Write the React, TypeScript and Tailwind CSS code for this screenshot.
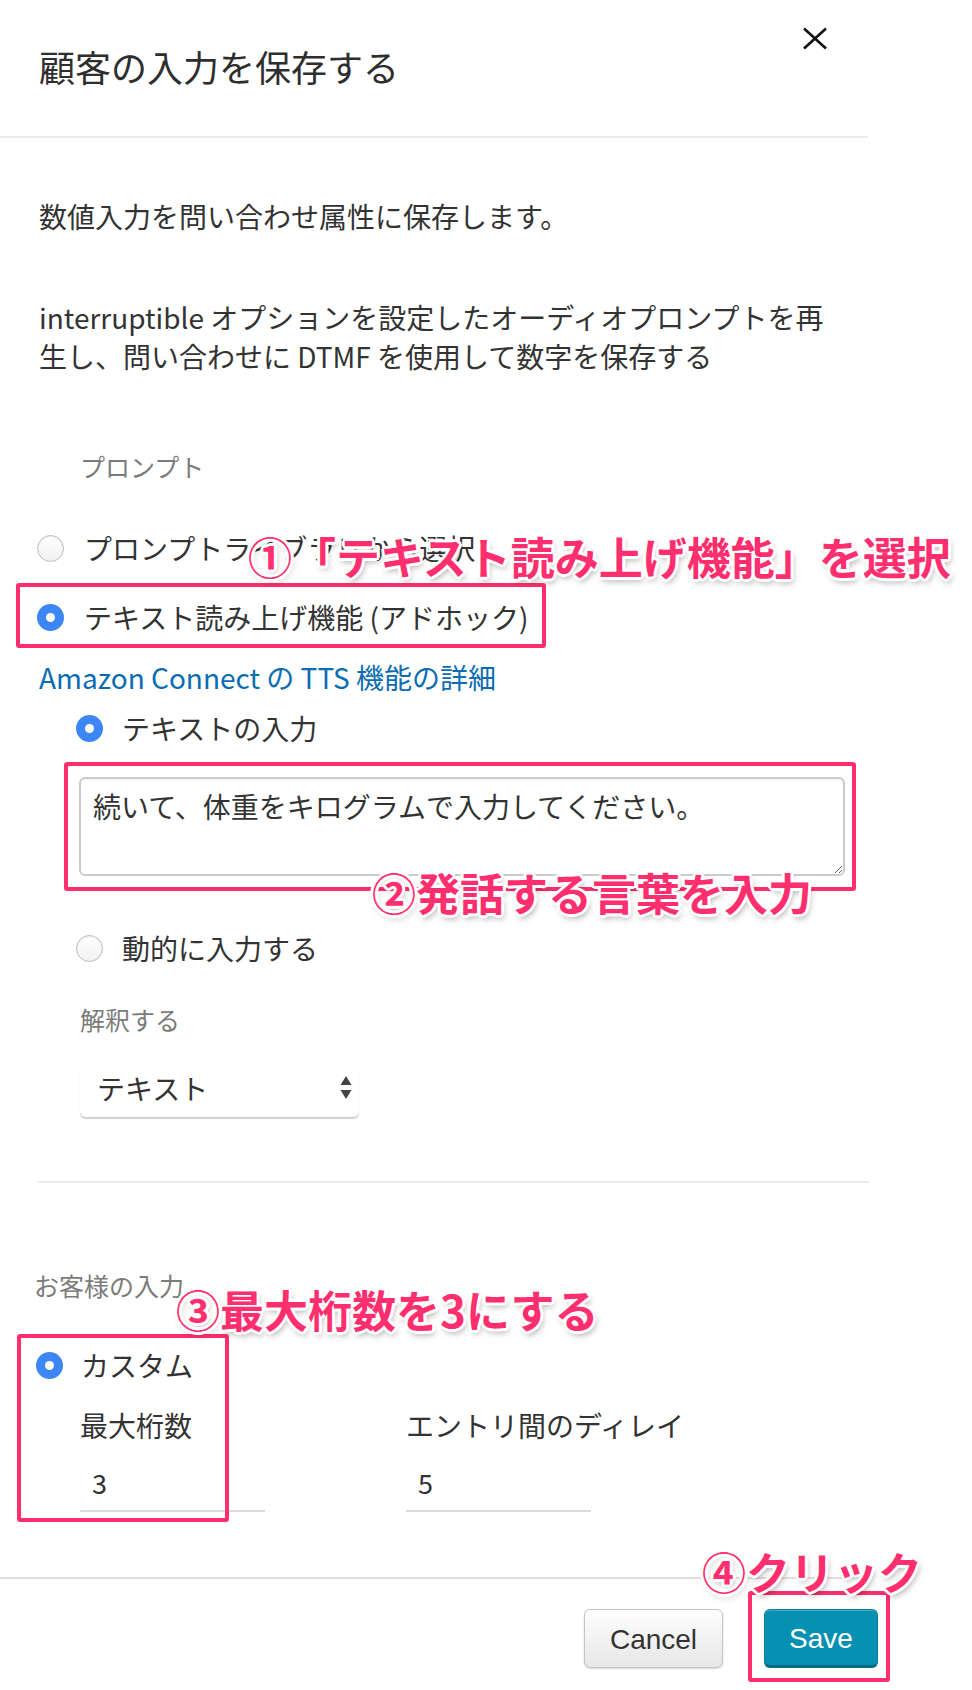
import React from "react"

interface RadioProps {
  checked?: boolean
}

function Radio({ checked }: RadioProps) {
  if (checked) {
    return (
      <span className="flex h-[27px] w-[27px] shrink-0 items-center justify-center rounded-full bg-[#3d86f5]">
        <span className="h-[9px] w-[9px] rounded-full bg-white" />
      </span>
    )
  }
  return (
    <span className="h-[27px] w-[27px] shrink-0 rounded-full border border-[#bcbcbc] bg-gradient-to-b from-white to-[#f1f1f1] shadow-[inset_0_1px_2px_rgba(0,0,0,0.08)]" />
  )
}

const note =
  "absolute whitespace-nowrap text-[44px] leading-[44px] font-bold text-[#ff2e6e] [text-shadow:3px_0_0_#fff,-3px_0_0_#fff,0_3px_0_#fff,0_-3px_0_#fff,2px_2px_0_#fff,-2px_-2px_0_#fff,2px_-2px_0_#fff,-2px_2px_0_#fff,2px_4px_6px_rgba(0,0,0,0.35)]"

const box = "absolute rounded-[3px] border-[4px] border-[#ff2e6e]"

export default function App() {
  return (
    <div className="relative h-[1690px] w-[972px] overflow-hidden bg-white font-['Noto_Sans_CJK_JP','Noto_Sans',sans-serif] text-[#333]">
      <div className="w-[890px]">
        {/* header */}
        <header className="flex h-[138px] w-[868px] items-start justify-between border-b-2 border-[#ececec]">
          <h1 className="ml-[39px] mt-[41px] text-[36px] font-normal leading-[50px] text-[#2e2e2e]">
            顧客の入力を保存する
          </h1>
          <button className="mr-[40px] mt-[27px]">
            <svg width="26" height="23" viewBox="0 0 26 23">
              <path d="M2 1.5 L24 21.5 M24 1.5 L2 21.5" stroke="#111" strokeWidth="2.6" fill="none" />
            </svg>
          </button>
        </header>

        {/* body */}
        <div className="px-[39px]">
          <p className="mt-[59px] text-[28px] leading-[39px]">数値入力を問い合わせ属性に保存します。</p>
          <p className="mt-[62px] w-[790px] text-[28px] leading-[39px]">
            interruptible オプションを設定したオーディオプロンプトを再生し、問い合わせに DTMF を使用して数字を保存する
          </p>

          <div className="ml-[41px] mt-[73px] text-[25px] leading-[34px] text-[#7b7b7b]">プロンプト</div>

          <label className="-ml-[2px] mt-[45px] flex h-[40px] items-center gap-[20px] text-[28px]">
            <Radio />
            <span>プロンプトライブラリから選択</span>
          </label>
          <label className="-ml-[2px] mt-[29px] flex h-[40px] items-center gap-[20px] text-[28px]">
            <Radio checked />
            <span>テキスト読み上げ機能 (アドホック)</span>
          </label>

          <a className="mt-[21px] block text-[28px] leading-[39px] text-[#0a6cb2]">Amazon Connect の TTS 機能の詳細</a>

          <label className="ml-[37px] mt-[11px] flex h-[40px] items-center gap-[19px] text-[28px]">
            <Radio checked />
            <span>テキストの入力</span>
          </label>

          <textarea
            readOnly
            defaultValue="続いて、体重をキログラムで入力してください。"
            className="ml-[40px] mt-[29px] block h-[99px] w-[766px] rounded-[6px] border-2 border-[#cbcbcb] px-[12px] pt-[8px] text-[28px] leading-[39px] text-[#333] shadow-[inset_0_1px_2px_rgba(0,0,0,0.06)] outline-none"
          />

          <label className="ml-[37px] mt-[52px] flex h-[40px] items-center gap-[19px] text-[28px]">
            <Radio />
            <span>動的に入力する</span>
          </label>

          <div className="ml-[41px] mt-[34px] text-[25px] leading-[34px] text-[#7b7b7b]">解釈する</div>

          <div className="ml-[41px] mt-[29px] flex h-[52px] w-[279px] items-center justify-between rounded-[6px] bg-white pb-[6px] pl-[17px] pr-[6px] shadow-[0_2px_1px_#cfcfcf]">
            <span className="text-[28px] leading-[39px]">テキスト</span>
            <svg width="14" height="26" viewBox="0 0 14 26">
              <path d="M7 1 L12.5 10 L1.5 10 Z M1.5 15 L12.5 15 L7 24 Z" fill="#444" />
            </svg>
          </div>

          <div className="-ml-[1px] mt-[64px] h-[2px] w-[831px] bg-[#ececec]" />

          <div className="-ml-[5px] mt-[85px] text-[25px] leading-[34px] text-[#7b7b7b]">お客様の入力</div>

          <label className="-ml-[3px] mt-[43px] flex h-[40px] items-center gap-[18px] text-[28px]">
            <Radio checked />
            <span>カスタム</span>
          </label>

          <div className="ml-[41px] mt-[21px] grid grid-cols-[326px_200px]">
            <div>
              <div className="text-[28px] leading-[39px]">最大桁数</div>
              <div className="mt-[11px] flex h-[56px] w-[185px] items-center border-b-2 border-[#dcdcdc] pl-[12px] text-[27px]">3</div>
            </div>
            <div>
              <div className="whitespace-nowrap text-[28px] leading-[39px]">エントリ間のディレイ</div>
              <div className="mt-[11px] flex h-[56px] w-[185px] items-center border-b-2 border-[#dcdcdc] pl-[12px] text-[27px]">5</div>
            </div>
          </div>
        </div>

        {/* footer */}
        <div className="mt-[65px] h-[2px] w-[870px] bg-[#e0e0e0]" />
        <div className="mt-[30px] flex w-[878px] justify-end gap-[41px] font-['Liberation_Sans',Arial,sans-serif]">
          <button className="h-[59px] w-[139px] rounded-[6px] border border-[#c4c4c4] bg-gradient-to-b from-white to-[#e6e6e6] pt-[3px] text-[28px] text-[#333] shadow-[0_1px_2px_rgba(0,0,0,0.15)]">
            Cancel
          </button>
          <button className="h-[59px] w-[114px] rounded-[6px] border border-[#08809c] border-b-[3px] border-b-[#066a82] bg-[#0790b1] pt-[3px] text-[28px] text-white shadow-[inset_0_1px_0_rgba(255,255,255,0.25)]">
            Save
          </button>
        </div>
      </div>

      {/* annotation overlays */}
      <div className={`${box} left-[16px] top-[583px] h-[65px] w-[530px]`} />
      <div className={`${box} left-[64px] top-[762px] h-[129px] w-[792px]`} />
      <div className={`${box} left-[17px] top-[1334px] h-[188px] w-[212px]`} />
      <div className={`${box} left-[748px] top-[1591px] h-[91px] w-[142px]`} />

      <div className={`${note} left-[248px] top-[534px]`}>①「テキスト読み上げ機能」を選択</div>
      <div className={`${note} left-[372px] top-[870px]`}>②発話する言葉を入力</div>
      <div className={`${note} left-[176px] top-[1287px]`}>③最大桁数を3にする</div>
      <div className={`${note} left-[702px] top-[1549px]`}>④クリック</div>
    </div>
  )
}
